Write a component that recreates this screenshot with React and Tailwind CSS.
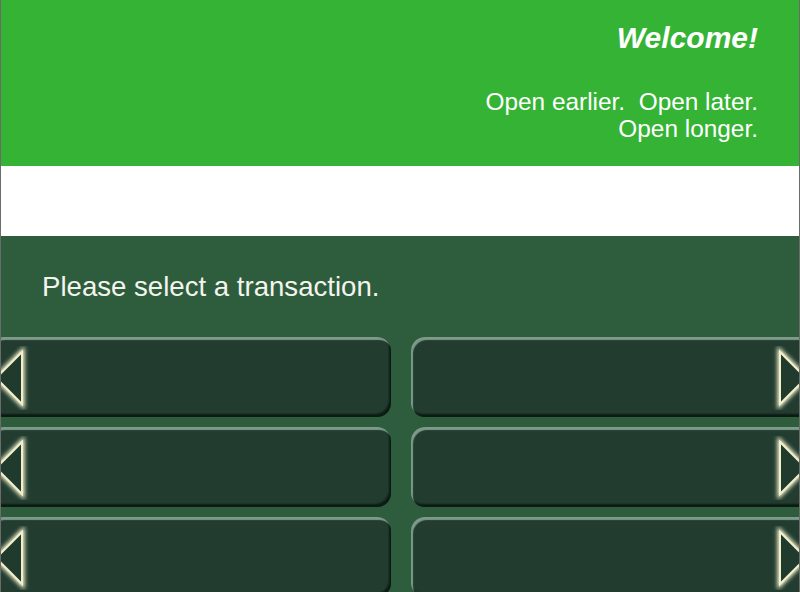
import React from 'react'

function Arrow({ side }) {
  const left = side === 'left'
  return (
    <svg
      width="34"
      height="64"
      viewBox="0 0 34 64"
      className={`absolute top-[9px] ${left ? 'left-[9px]' : 'left-[359px]'}`}
    >
      <defs>
        <filter id={`glow-${side}`} x="-50%" y="-50%" width="200%" height="200%">
          <feGaussianBlur stdDeviation="2.2" />
        </filter>
      </defs>
      {left ? (
        <g>
          <polygon points="24,6 24,58 -2,32" fill="none" stroke="#fffbd8" strokeWidth="5" filter={`url(#glow-${side})`} />
          <polygon points="24,6 24,58 -2,32" fill="#203b2d" stroke="#f3efc8" strokeWidth="2" />
        </g>
      ) : (
        <g>
          <polygon points="10,6 10,58 36,32" fill="none" stroke="#fffbd8" strokeWidth="5" filter={`url(#glow-${side})`} />
          <polygon points="10,6 10,58 36,32" fill="#203b2d" stroke="#f3efc8" strokeWidth="2" />
        </g>
      )}
    </svg>
  )
}

function TxButton({ side }) {
  const left = side === 'left'
  return (
    <div
      className={`relative h-[80px] w-[402px] shrink-0 rounded-[14px] bg-[#223d30] shadow-[inset_2px_3px_1px_#7e9b8a,inset_-2px_-3px_2px_#0c1b13] ${
        left ? 'ml-[-12px]' : ''
      }`}
    >
      <Arrow side={side} />
    </div>
  )
}

export default function App() {
  const rows = [0, 1, 2]
  return (
    <div
      className="h-[592px] w-[800px] overflow-hidden border-x border-[#6b6b6b] bg-[#2e5d3e]"
      style={{ fontFamily: '"Liberation Sans", Arial, sans-serif' }}
    >
      <header className="flex h-[166px] flex-col items-end bg-[#35b335] pr-[41px] pt-[20px] text-white">
        <h1 className="text-[30px] font-bold italic leading-[36px]">Welcome!</h1>
        <p className="mt-[32px] text-right text-[24.4px] leading-[27px]">
          Open earlier.&nbsp; Open later.
          <br />
          Open longer.
        </p>
      </header>
      <div className="h-[70px] bg-white" />
      <main className="pt-[35px]">
        <p className="pl-[41px] text-[27.6px] leading-[32px] text-[#f4f4ee]">Please select a transaction.</p>
        <div className="mt-[34px] flex flex-col gap-[10px]">
          {rows.map(r => (
            <div key={r} className="flex gap-[20px]">
              <TxButton side="left" />
              <TxButton side="right" />
            </div>
          ))}
        </div>
      </main>
    </div>
  )
}
